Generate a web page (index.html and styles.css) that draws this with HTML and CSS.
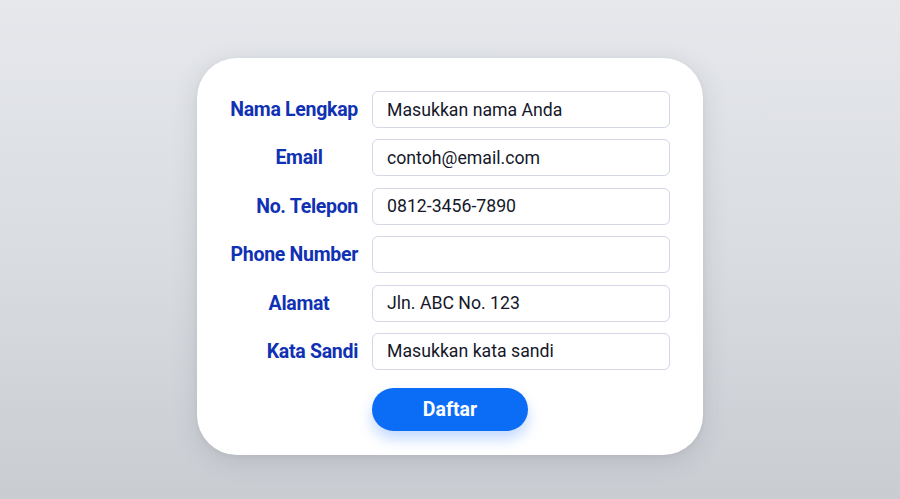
FILE: index.html
```html
<!DOCTYPE html>
<html lang="id">
<head>
  <meta charset="UTF-8" />
  <meta name="viewport" content="width=device-width, initial-scale=1.0"/>
  <title>Pendaftaran</title>
  <link rel="stylesheet" href="styles.css">
</head>
<body>

  <main class="page">
    <form class="card" onsubmit="return false">
      <div class="form-row">
        <label class="label" for="nama">Nama Lengkap</label>
        <input class="field" id="nama" type="text" value="Masukkan nama Anda">
      </div>
      <div class="form-row">
        <label class="label label-center" for="email">Email</label>
        <input class="field" id="email" type="text" value="contoh@email.com">
      </div>
      <div class="form-row">
        <label class="label" for="telepon">No. Telepon</label>
        <input class="field" id="telepon" type="text" value="0812-3456-7890">
      </div>
      <div class="form-row">
        <label class="label" for="phone">Phone Number</label>
        <input class="field" id="phone" type="text" value="">
      </div>
      <div class="form-row">
        <label class="label label-center" for="alamat">Alamat</label>
        <input class="field" id="alamat" type="text" value="Jln. ABC No. 123">
      </div>
      <div class="form-row">
        <label class="label" for="sandi">Kata Sandi</label>
        <input class="field" id="sandi" type="text" value="Masukkan kata sandi">
      </div>
      <div class="form-actions">
        <button class="submit-btn" type="submit">Daftar</button>
      </div>
    </form>
  </main>

</body>
</html>
```

FILE: styles.css
```css
body {
  margin: 0;
  font-family: Roboto, 'Liberation Sans', sans-serif;
  background: linear-gradient(180deg, #e6e8ec 0%, #d8dbdf 55%, #c9ccd1 100%);
  min-height: 100vh;
}

.page {
  height: 499px;
  display: flex;
  justify-content: center;
  padding-top: 58px;
  box-sizing: border-box;
}

.card {
  width: 506px;
  height: 397px;
  box-sizing: border-box;
  padding: 33px 33px 24px;
  background-color: #fff;
  border-radius: 40px;
  box-shadow: 0 6px 24px rgba(90, 96, 110, 0.18), 0 1px 4px rgba(90, 96, 110, 0.08);
  display: flex;
  flex-direction: column;
  gap: 11.4px;
}

.form-row {
  display: grid;
  grid-template-columns: 128px 298px;
  column-gap: 14px;
  align-items: center;
}

.label {
  font-size: 19.5px;
  font-weight: 700;
  color: #1031b3;
  text-align: right;
  white-space: nowrap;
  letter-spacing: -0.3px;
}

.label-center {
  text-align: center;
  padding-left: 10px;
}

.field {
  height: 37px;
  box-sizing: border-box;
  border: 1px solid #d3d7e6;
  border-radius: 6px;
  padding: 0 14px;
  font-family: Roboto, 'Liberation Sans', sans-serif;
  font-size: 17.7px;
  color: #15172a;
  background-color: #fff;
  outline: none;
}

.form-actions {
  padding-left: 142px;
  margin-top: 6.6px;
}

.submit-btn {
  width: 156px;
  height: 43px;
  border: none;
  border-radius: 22px;
  background-color: #0b6cf6;
  color: #fff;
  font-family: Roboto, 'Liberation Sans', sans-serif;
  font-size: 19.5px;
  font-weight: 700;
  cursor: pointer;
  box-shadow: 0 8px 14px rgba(40, 120, 255, 0.28);
}
```
